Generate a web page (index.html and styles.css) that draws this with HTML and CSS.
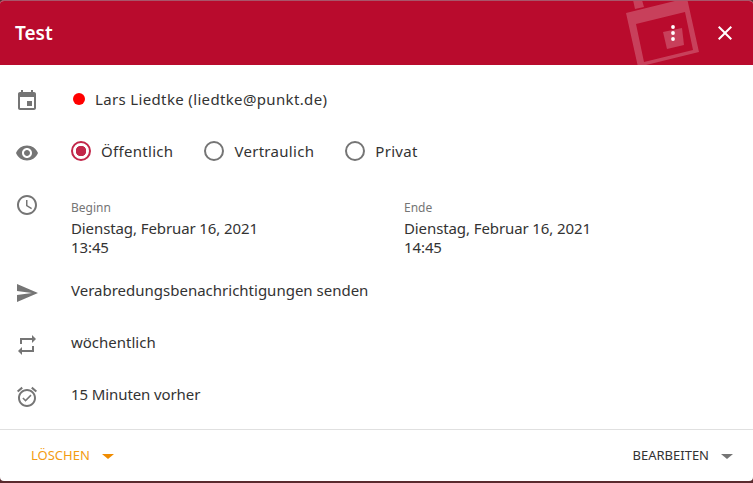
FILE: index.html
```html
<!DOCTYPE html>
<html lang="de">
    <head>
        <meta charset="UTF-8">
        <title>Test</title>
        <link rel="stylesheet" href="styles.css">
    </head>
    <body>
        <div class="dialog">
            <div class="header">
                <h2 class="title">Test</h2>
                <svg class="watermark" width="90" height="64" viewBox="620 1 90 64">
                    <g fill="#fff" fill-opacity="0.22">
                        <path fill-rule="evenodd" d="M626 13L687 -2L699 52L638 67zM636 24L644 62L693 50L685 12z"/>
                        <path d="M663 32L682 28L684 45L667 49z"/>
                        <path d="M633 0L642 0L644 7L635 9z"/>
                    </g>
                </svg>
                <div class="header-actions">
                    <button class="icon-btn">
                        <svg width="24" height="24" viewBox="0 0 24 24" fill="#fff"><circle cx="12" cy="6" r="1.9"/><circle cx="12" cy="12" r="1.9"/><circle cx="12" cy="18" r="1.9"/></svg>
                    </button>
                    <button class="icon-btn">
                        <svg width="24" height="24" viewBox="0 0 24 24" fill="#fff"><path d="M19 6.41L17.59 5 12 10.59 6.41 5 5 6.41 10.59 12 5 17.59 6.41 19 12 13.41 17.59 19 19 17.59 13.41 12z"/></svg>
                    </button>
                </div>
            </div>

            <div class="content">
                <div class="row">
                    <svg class="icon" viewBox="0 0 24 24"><path d="M17 12h-5v5h5v-5zM16 1v2H8V1H6v2H5c-1.11 0-1.99.9-1.99 2L3 19c0 1.1.89 2 2 2h14c1.1 0 2-.9 2-2V5c0-1.1-.9-2-2-2h-1V1h-2zm3 18H5V8h14v11z"/></svg>
                    <div class="calendar"><span class="dot"></span>Lars Liedtke (liedtke@punkt.de)</div>
                </div>

                <div class="row">
                    <svg class="icon" viewBox="0 0 24 24"><path d="M12 4.5C7 4.5 2.73 7.61 1 12c1.73 4.39 6 7.5 11 7.5s9.27-3.11 11-7.5c-1.73-4.39-6-7.5-11-7.5zM12 17c-2.76 0-5-2.24-5-5s2.24-5 5-5 5 2.24 5 5-2.24 5-5 5zm0-8c-1.66 0-3 1.34-3 3s1.34 3 3 3 3-1.34 3-3-1.34-3-3-3z"/></svg>
                    <div class="radios">
                        <div class="radio selected"><span class="radio-mark"></span>Öffentlich</div>
                        <div class="radio"><span class="radio-mark"></span>Vertraulich</div>
                        <div class="radio"><span class="radio-mark"></span>Privat</div>
                    </div>
                </div>

                <div class="row row-times">
                    <svg class="icon" viewBox="0 0 24 24"><path d="M11.99 2C6.47 2 2 6.48 2 12s4.47 10 9.99 10C17.52 22 22 17.52 22 12S17.52 2 11.99 2zM12 20c-4.42 0-8-3.58-8-8s3.58-8 8-8 8 3.58 8 8-3.58 8-8 8zm.5-13H11v6l5.25 3.15.75-1.23-4.5-2.67z"/></svg>
                    <div class="times">
                        <div class="time">
                            <div class="time-label">Beginn</div>
                            <div>Dienstag, Februar 16, 2021</div>
                            <div>13:45</div>
                        </div>
                        <div class="time">
                            <div class="time-label">Ende</div>
                            <div>Dienstag, Februar 16, 2021</div>
                            <div>14:45</div>
                        </div>
                    </div>
                </div>

                <div class="row row-low">
                    <svg class="icon" viewBox="0 0 24 24"><path d="M2.01 21L23 12 2.01 3 2 10l15 2-15 2z"/></svg>
                    <div>Verabredungsbenachrichtigungen senden</div>
                </div>

                <div class="row row-low">
                    <svg class="icon" viewBox="0 0 24 24"><path d="M7 7h10v3l4-4-4-4v3H5v6h2V7zm10 10H7v-3l-4 4 4 4v-3h12v-6h-2v4z"/></svg>
                    <div>wöchentlich</div>
                </div>

                <div class="row row-low">
                    <svg class="icon" viewBox="0 0 24 24"><path d="M22 5.72l-4.6-3.86-1.29 1.53 4.6 3.86L22 5.72zM7.88 3.39L6.6 1.86 2 5.71l1.29 1.53 4.59-3.85zM12 4c-4.97 0-9 4.03-9 9s4.03 9 9 9 9-4.03 9-9-4.03-9-9-9zm0 16c-3.87 0-7-3.13-7-7s3.13-7 7-7 7 3.13 7 7-3.13 7-7 7zm-1.46-5.47L8.41 12.4l-1.06 1.06 3.18 3.18 6-6-1.06-1.06-4.93 4.95z"/></svg>
                    <div class="tight">15 Minuten vorher</div>
                </div>
            </div>

            <div class="footer">
                <div class="action action-delete">LÖSCHEN<span class="caret"></span></div>
                <div class="action">BEARBEITEN<span class="caret"></span></div>
            </div>
        </div>
    </body>
</html>
```

FILE: styles.css
```css
* { box-sizing: border-box; }

html, body { margin: 0; height: 100%; }

body {
    background-color: #5a2a2e;
    font-family: "Noto Sans", sans-serif;
    font-size: 15px;
    color: #333;
}

.dialog {
    height: 481px; overflow: hidden;
    background-color: #fff; border-radius: 4px;
    border-top: 1px solid #a8566a;
    display: flex; flex-direction: column;
}

.header {
    height: 64px; flex: none; overflow: hidden;
    background-color: #b90b2d;
    display: flex; align-items: center; justify-content: space-between;
    padding: 0 15px;
    position: relative;
}

.title {
    margin: 0; color: #fff;
    font-size: 19px; font-weight: 600;
}

.watermark { position: absolute; left: 620px; top: 0; }

.header-actions {
    display: flex; align-items: center; gap: 16px;
    margin-right: -5px; position: relative;
}

.icon-btn {
    width: 36px; height: 36px; padding: 6px;
    border: none; background: none;
    display: block;
}

.icon-btn svg { display: block; }

.content { flex: 1; padding-top: 8px; }

.row {
    height: 52px; padding-left: 15px;
    display: flex; align-items: center;
}

.row-times { height: 87px; align-items: flex-start; padding-top: 16px; }

.icon {
    width: 24px; height: 24px; flex: none;
    margin: 4px 32px 0 0; fill: #757575;
}

.row-times .icon { margin-top: 0; }
.row-low .icon { margin-top: 6px; }

.calendar { display: flex; align-items: center; margin-left: 2px; letter-spacing: 0.35px; }

.dot {
    width: 12px; height: 12px; margin-right: 10px;
    border-radius: 50%; background: #f00;
}

.radios { display: flex; letter-spacing: 0.3px; }

.radio { display: flex; align-items: center; margin-right: 31px; }

.radio-mark {
    width: 20px; height: 20px; margin-right: 10px;
    border: 2px solid #757575; border-radius: 50%;
}

.selected .radio-mark {
    border-color: #c2274a;
    background: radial-gradient(circle, #c2274a 0 5px, transparent 5.5px);
}

.times { display: flex; margin-top: 5px; line-height: 19px; letter-spacing: -0.1px; }

.time { width: 333px; }

.time-label {
    font-size: 12px; color: #757575;
    line-height: 20px; margin-bottom: 1px; letter-spacing: 0;
}

.tight { letter-spacing: -0.1px; }

.footer {
    height: 52px; flex: none;
    border-top: 1px solid #e0e0e0;
    display: flex; align-items: center; justify-content: space-between;
    padding: 0 20px 2px 31px;
    font-size: 13px;
}

.action { display: flex; align-items: center; }

.action-delete { color: #f39c12; }

.caret {
    margin-left: 12px; margin-top: 3px;
    border-left: 6px solid transparent; border-right: 6px solid transparent;
    border-top: 5px solid #757575;
}

.action-delete .caret { border-top-color: #f08c00; }
```
